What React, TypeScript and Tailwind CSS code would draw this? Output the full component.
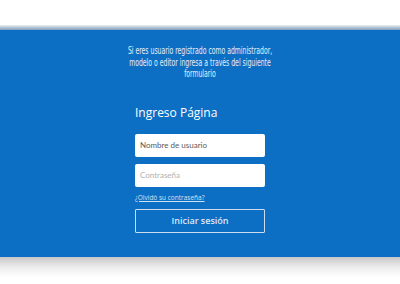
import React from 'react';

const App = () => {
  return (
    <div className="w-[400px] h-[284px] bg-white overflow-hidden" style={{ fontFamily: '"Open Sans", sans-serif' }}>
      {/* top strip */}
      <div className="h-[25px] bg-white" />
      <div className="h-[5px] bg-gradient-to-b from-[#eef1f4] via-[#b4c4d4] to-[#7d9dbf]" />

      {/* blue panel */}
      <section className="h-[227px] bg-[#0d6fc4] flex flex-col items-center pt-[15px]">
        <p
          className="text-center text-[#e6eef8] text-[11px] leading-[11.5px] w-[280px] shrink-0 scale-x-[0.62] whitespace-nowrap"
          style={{ fontFamily: '"DejaVu Sans Condensed", "Liberation Sans Narrow", sans-serif' }}
        >
          Si eres usuario registrado como administrador,
          <br />
          modelo o editor ingresa a través del siguiente
          <br />
          formulario
        </p>

        <div className="w-[130px] mt-[24px] flex flex-col">
          <h1 className="text-white text-[12px] leading-[18px] font-normal">Ingreso Página</h1>

          <input
            type="text"
            placeholder="Nombre de usuario"
            className="mt-[12px] h-[23px] w-full bg-white rounded-[2px] px-[5px] text-[8px] placeholder:text-[#5a5a5a] outline-none"
            style={{ fontFamily: 'Lato, sans-serif' }}
          />
          <input
            type="password"
            placeholder="Contraseña"
            className="mt-[7px] h-[23px] w-full bg-white rounded-[2px] px-[5px] text-[8px] placeholder:text-[#b0b0b0] outline-none"
            style={{ fontFamily: 'Lato, sans-serif' }}
          />

          <a href="#" className="mt-[6px] text-[6.5px] leading-[9px] text-[#cfe3f7] underline">
            ¿Olvidó su contraseña?
          </a>

          <button className="mt-[7px] h-[24px] w-full border border-[#c9dcf0] rounded-[1px] text-[#dce8f5] text-[9px] font-semibold">
            Iniciar sesión
          </button>
        </div>
      </section>

      {/* bottom shadow */}
      <div className="h-[20px] bg-gradient-to-b from-[#c8c8c8] via-[#ececec] to-white" />
    </div>
  );
};

export default App;
